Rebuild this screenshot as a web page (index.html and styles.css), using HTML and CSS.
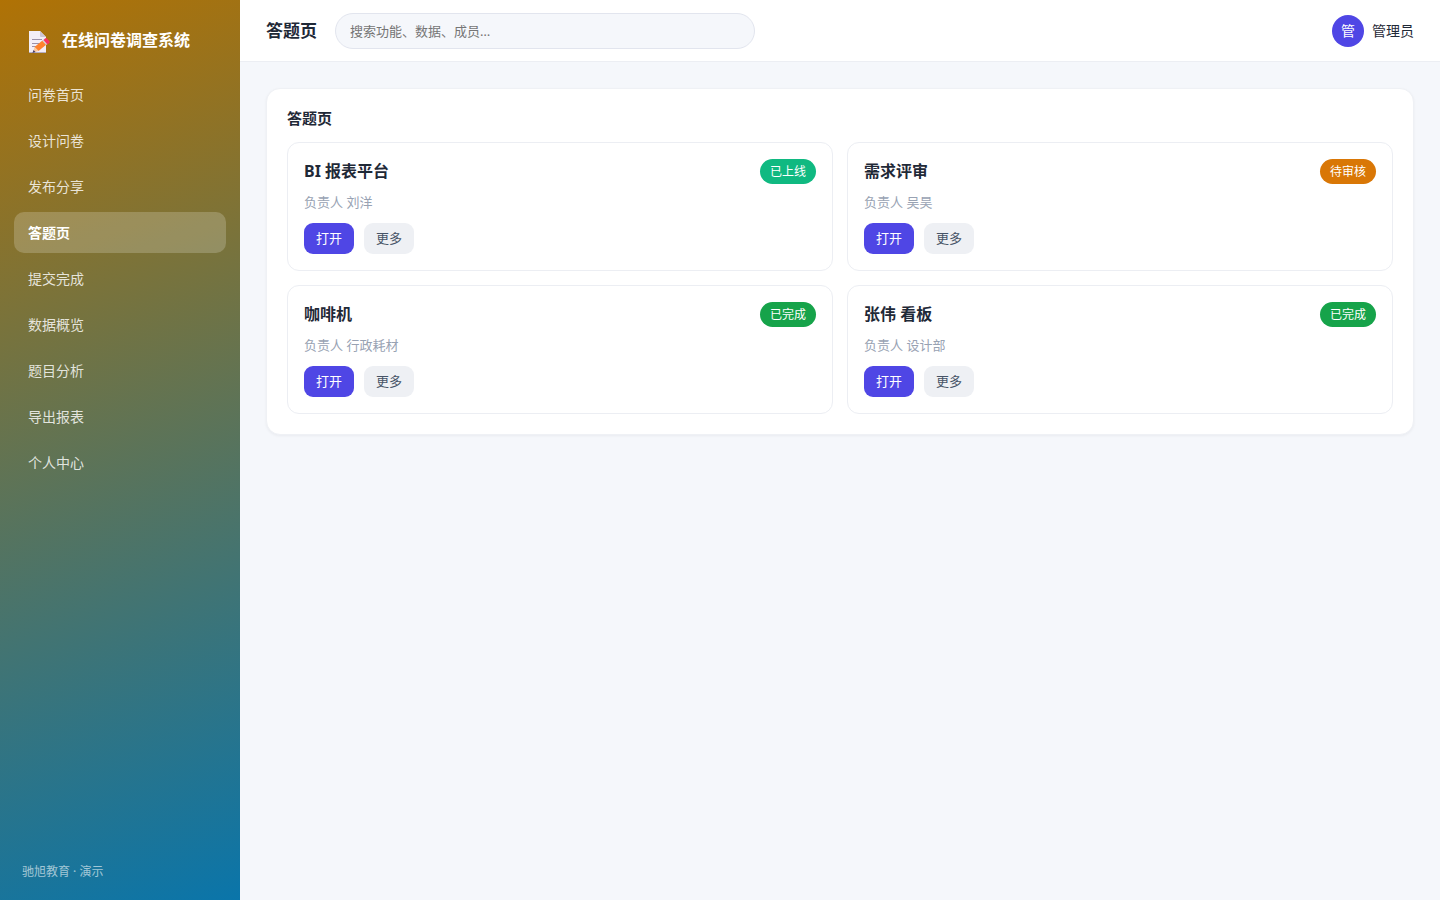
FILE: index.html
```html
<!DOCTYPE html>
<html lang="zh-CN">
<head>
  <meta charset="UTF-8">
  <meta name="viewport" content="width=device-width, initial-scale=1">
  <title>答题页 - 在线问卷调查系统</title>
  <link rel="stylesheet" href="styles.css">
</head>
<body>

  <div class="app">
    <aside class="sidebar">
      <div class="brand">
        <svg class="brand-icon" viewBox="0 -4 22 28" aria-hidden="true">
          <path fill="#f3eef8" d="M1 1h11l6 6v16H1z"/>
          <path fill="#cdc4d6" d="M12 1l6 6h-5q-1 0-1-1z"/>
          <path fill="none" stroke="#9b91ab" d="M4 9.500h10M4 13.500h8M4 16.500h4"/>
          <path fill="#b4acc0" d="M1 22h17v1H1z"/>
          <path fill="#ff822d" d="M14.500 10.500l4 4-8 6.500-4-4z"/>
          <path fill="#fcc89b" d="M6.500 17l4 4L5 22.500z"/>
          <path fill="#433b6b" d="M5.500 20l2 2L4.500 23z"/>
          <path fill="#d3d3d3" d="M15.500 9.500l4 4.500-1.500 1-4-4.500z"/>
          <path fill="#f8315f" d="M17 8.500q1-1 2 0l2.200 2.400q1 1 0 2L19.500 14.500l-4-4.500z"/>
        </svg>
        <span>在线问卷调查系统</span>
      </div>
      <nav class="nav">
        <a href="#">问卷首页</a>
        <a href="#">设计问卷</a>
        <a href="#">发布分享</a>
        <a href="#" class="active">答题页</a>
        <a href="#">提交完成</a>
        <a href="#">数据概览</a>
        <a href="#">题目分析</a>
        <a href="#">导出报表</a>
        <a href="#">个人中心</a>
      </nav>
      <div class="side-foot">驰旭教育 · 演示</div>
    </aside>

    <div class="main">
      <header class="topbar">
        <h1>答题页</h1>
        <input class="search" type="search" placeholder="搜索功能、数据、成员…" aria-label="搜索">
        <div class="user">
          <span class="avatar">管</span>
          <span>管理员</span>
        </div>
      </header>

      <main class="content">
        <section class="panel">
          <h2>答题页</h2>
          <div class="cards">
            <article class="card">
              <div class="card-head">
                <h3>BI 报表平台</h3>
                <span class="badge online">已上线</span>
              </div>
              <p>负责人 刘洋</p>
              <div class="actions">
                <button type="button" class="btn primary">打开</button>
                <button type="button" class="btn">更多</button>
              </div>
            </article>
            <article class="card">
              <div class="card-head">
                <h3>需求评审</h3>
                <span class="badge pending">待审核</span>
              </div>
              <p>负责人 吴昊</p>
              <div class="actions">
                <button type="button" class="btn primary">打开</button>
                <button type="button" class="btn">更多</button>
              </div>
            </article>
            <article class="card">
              <div class="card-head">
                <h3>咖啡机</h3>
                <span class="badge done">已完成</span>
              </div>
              <p>负责人 行政耗材</p>
              <div class="actions">
                <button type="button" class="btn primary">打开</button>
                <button type="button" class="btn">更多</button>
              </div>
            </article>
            <article class="card">
              <div class="card-head">
                <h3>张伟 看板</h3>
                <span class="badge done">已完成</span>
              </div>
              <p>负责人 设计部</p>
              <div class="actions">
                <button type="button" class="btn primary">打开</button>
                <button type="button" class="btn">更多</button>
              </div>
            </article>
          </div>
        </section>
      </main>
    </div>
  </div>

</body>
</html>
```
FILE: styles.css
```css
* {
  box-sizing: border-box;
  margin: 0;
  padding: 0;
}

body {
  font-family: "Noto Sans", "Noto Sans CJK SC", sans-serif;
  font-size: 14px;
  line-height: 21px;
  color: #1f2937;
  background: #f5f7fb;
}

input, button {
  font-family: inherit;
}

.app {
  display: flex;
  min-height: 100vh;
}

/* sidebar */
.sidebar {
  width: 240px;
  flex-shrink: 0;
  display: flex;
  flex-direction: column;
  padding: 20px 14px;
  color: #fff;
  background: linear-gradient(160deg, #b07205, #0a75aa);
}

.brand {
  display: flex;
  align-items: center;
  gap: 12px;
  height: 40px;
  padding: 0 14px;
  margin-bottom: 14px;
  font-size: 16px;
  font-weight: 700;
}

.brand-icon {
  width: 22px;
  height: 28px;
}

.nav {
  display: flex;
  flex-direction: column;
  gap: 5px;
}

.nav a {
  padding: 10px 14px;
  border-radius: 10px;
  color: rgba(255, 255, 255, 0.82);
  text-decoration: none;
}

.nav a.active {
  background: rgba(255, 255, 255, 0.2);
  color: #fff;
  font-weight: 700;
}

.side-foot {
  margin-top: auto;
  padding: 0 8px;
  font-size: 12px;
  line-height: 16px;
  color: rgba(255, 255, 255, 0.6);
}

/* main */
.main {
  flex: 1;
  min-width: 0;
}

.topbar {
  display: flex;
  align-items: center;
  gap: 18px;
  height: 62px;
  padding: 0 26px;
  background: #fff;
  border-bottom: 1px solid #eceef3;
}

.topbar h1 {
  font-size: 17px;
  font-weight: 700;
  white-space: nowrap;
}

.search {
  width: 100%;
  max-width: 420px;
  height: 36px;
  padding: 0 14px;
  border: 1px solid #e2e5ee;
  border-radius: 18px;
  background: #f5f7fb;
  font-size: 13px;
  outline: none;
}

.search::placeholder {
  color: #757575;
}

.user {
  display: flex;
  align-items: center;
  gap: 8px;
  margin-left: auto;
  white-space: nowrap;
}

.avatar {
  width: 32px;
  height: 32px;
  border-radius: 50%;
  background: #4f46e5;
  color: #fff;
  font-size: 14px;
  line-height: 32px;
  text-align: center;
}

.content {
  padding: 26px;
}

.panel {
  padding: 20px;
  border: 1px solid #eff1f5;
  border-radius: 14px;
  background: #fff;
  box-shadow: 0 1px 3px rgba(16, 24, 40, 0.05);
}

.panel h2 {
  margin-bottom: 15px;
  font-size: 15px;
  line-height: 18px;
}

.cards {
  display: grid;
  grid-template-columns: repeat(2, 1fr);
  gap: 14px;
}

.card {
  padding: 16px;
  border: 1px solid #eceef3;
  border-radius: 12px;
}

.card-head {
  display: flex;
  align-items: center;
  justify-content: space-between;
}

.card h3 {
  font-size: 16px;
  line-height: 25px;
}

.card p {
  margin: 8px 0 10px;
  font-size: 13px;
  color: #98a2b3;
}

.badge {
  padding: 0 10px;
  border-radius: 13px;
  color: #fff;
  font-size: 12px;
  line-height: 25px;
}

.badge.online { background: #10b981; }
.badge.pending { background: #d97706; }
.badge.done { background: #16a34a; }

.actions {
  display: flex;
  gap: 10px;
}

.btn {
  padding: 0 12px;
  border: none;
  border-radius: 9px;
  background: #eef0f4;
  color: #475467;
  font-size: 13px;
  line-height: 31px;
  cursor: pointer;
}

.btn.primary {
  background: #4f46e5;
  color: #fff;
}
```
